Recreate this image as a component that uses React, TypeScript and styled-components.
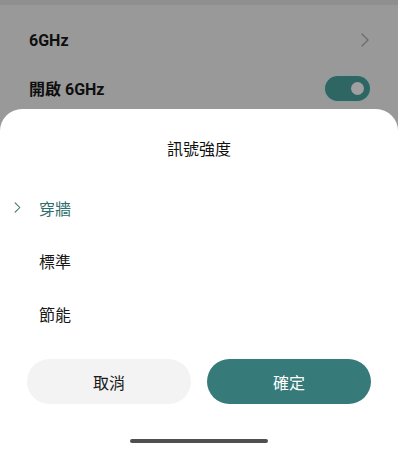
import { FunctionComponent, useState } from "react";
import styled, { createGlobalStyle } from "styled-components";

const GlobalStyle = createGlobalStyle`
  html, body {
    margin: 0;
    padding: 0;
    background: #999999;
  }
  body {
    font-family: Roboto, "Noto Sans CJK TC", "Noto Sans", sans-serif;
    -webkit-font-smoothing: antialiased;
  }
`;

const Screen = styled.div`
  width: 398px;
  height: 450px;
  display: flex;
  flex-direction: column;
  background: #999999;
  overflow: hidden;
`;

const StatusStrip = styled.div`
  height: 5px;
  background: #8f8f8f;
  flex-shrink: 0;
`;

const SettingsList = styled.div`
  display: flex;
  flex-direction: column;
  padding: 0 29px;
  height: 104px;
  flex-shrink: 0;
`;

const SettingRow = styled.div<{ $height: number }>`
  height: ${(p) => p.$height}px;
  display: flex;
  align-items: center;
  justify-content: space-between;
`;

const SettingLabel = styled.span`
  font-size: 16px;
  font-weight: 700;
  color: #0f0f0f;
  font-family: Roboto, "Noto Sans CJK TC", sans-serif;
`;

const Toggle = styled.div`
  width: 45px;
  height: 25px;
  border-radius: 13px;
  background: #2f6664;
  box-shadow: 0 0 0 1px #86a09e;
  display: flex;
  align-items: center;
  justify-content: flex-end;
  padding: 0 6px;
  box-sizing: border-box;
  margin-right: -1px;
`;

const Knob = styled.div`
  width: 13px;
  height: 13px;
  border-radius: 50%;
  background: #a0a0a0;
`;

const Sheet = styled.div`
  flex: 1;
  background: #ffffff;
  border-radius: 22px 22px 0 0;
  display: flex;
  flex-direction: column;
  padding: 27px 27px 0;
`;

const SheetTitle = styled.div`
  height: 24px;
  line-height: 24px;
  text-align: center;
  font-size: 16px;
  color: #111111;
  font-family: "Noto Sans CJK TC", sans-serif;
  margin-bottom: 21px;
`;

const OptionList = styled.div`
  display: flex;
  flex-direction: column;
  margin: 0 -27px;
`;

const Option = styled.div<{ $selected: boolean }>`
  height: 53px;
  display: flex;
  align-items: center;
  padding-left: 14px;
  color: ${(p) => (p.$selected ? "#2e6e6c" : "#161616")};
  font-size: 16px;
  font-family: "Noto Sans CJK TC", sans-serif;
  cursor: pointer;
`;

const Mark = styled.span`
  width: 25px;
  display: flex;
  align-items: center;
`;

const Buttons = styled.div`
  display: grid;
  grid-template-columns: 1fr 1fr;
  gap: 16px;
  margin-top: 19px;
`;

const ActionButton = styled.button<{ $primary?: boolean }>`
  height: 45px;
  border: none;
  border-radius: 23px;
  background: ${(p) => (p.$primary ? "#367a7a" : "#f3f3f3")};
  color: ${(p) => (p.$primary ? "#ffffff" : "#1a1a1a")};
  font-size: 16px;
  font-family: "Noto Sans CJK TC", sans-serif;
  cursor: pointer;
`;

const HomeBar = styled.div`
  width: 138px;
  height: 4px;
  border-radius: 2px;
  background: #505050;
  margin: 35px auto 0;
`;

const Chevron: FunctionComponent<{ color: string; w: number; h: number }> = ({
  color,
  w,
  h,
}) => (
  <svg width={w} height={h} viewBox="0 0 8 14" fill="none">
    <path d="M1 1l6 6-6 6" stroke={color} strokeWidth="1.3" strokeLinecap="round" strokeLinejoin="round" />
  </svg>
);

const options = ["穿牆", "標準", "節能"];

const App: FunctionComponent = () => {
  const [selected, setSelected] = useState(0);
  return (
    <>
      <GlobalStyle />
      <Screen>
        <StatusStrip />
        <SettingsList>
          <SettingRow $height={70}>
            <SettingLabel>6GHz</SettingLabel>
            <Chevron color="#6b6b6b" w={8} h={14} />
          </SettingRow>
          <SettingRow $height={26}>
            <SettingLabel>開啟 6GHz</SettingLabel>
            <Toggle>
              <Knob />
            </Toggle>
          </SettingRow>
        </SettingsList>
        <Sheet>
          <SheetTitle>訊號強度</SheetTitle>
          <OptionList>
            {options.map((o, i) => (
              <Option key={o} $selected={i === selected} onClick={() => setSelected(i)}>
                <Mark>{i === selected && <Chevron color="#2e6e6c" w={7} h={11} />}</Mark>
                {o}
              </Option>
            ))}
          </OptionList>
          <Buttons>
            <ActionButton>取消</ActionButton>
            <ActionButton $primary>確定</ActionButton>
          </Buttons>
          <HomeBar />
        </Sheet>
      </Screen>
    </>
  );
};

export default App;
